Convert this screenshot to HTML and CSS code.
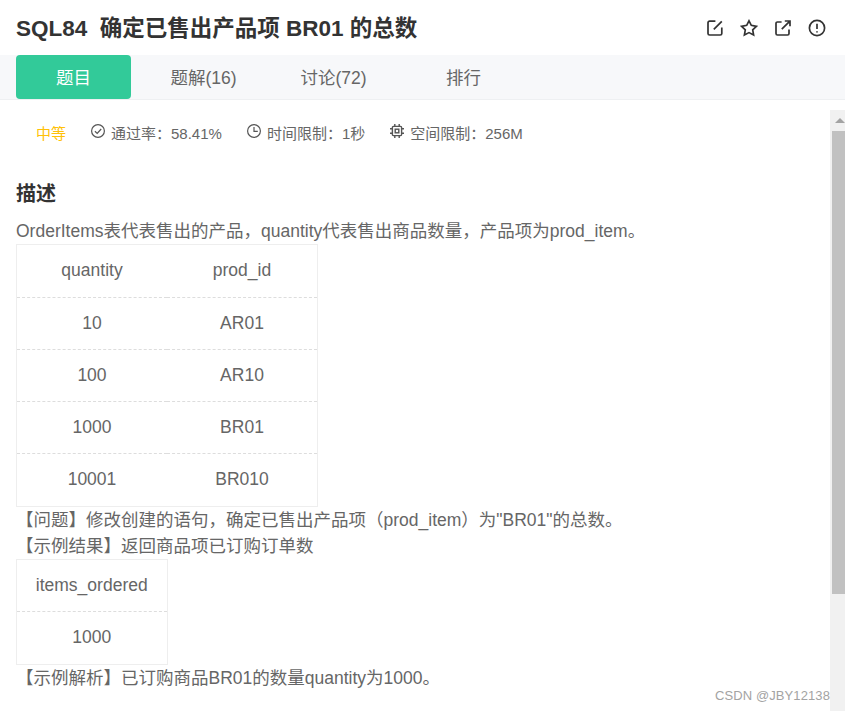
FILE: index.html
```html
<!DOCTYPE html>
<html lang="zh-CN">
<head>
<meta charset="utf-8">
<title>SQL84</title>
<link rel="stylesheet" href="styles.css">
</head>
<body>
<div class="page">
  <header class="head">
    <h1 class="title">SQL84&nbsp; 确定已售出产品项 BR01 的总数</h1>
    <div class="actions">
      <svg class="act" viewBox="0 0 18 18"><path d="M9.4 2.2H3.6A1.6 1.6 0 0 0 2 3.8v10.6A1.6 1.6 0 0 0 3.6 16h10.6a1.6 1.6 0 0 0 1.6-1.6V8.6M7.8 10.4 15.8 2.4"/></svg>
      <svg class="act" viewBox="0 0 18 18"><path d="M9 1.8 11.3 6.3 16.4 7.3 12.7 10.9 13.6 16 9 13.6 4.4 16 5.3 10.9 1.6 7.3 6.7 6.3Z"/></svg>
      <svg class="act" viewBox="0 0 18 18"><path d="M7.6 3H3.4A1.4 1.4 0 0 0 2 4.4v10.2A1.4 1.4 0 0 0 3.4 16h10.2a1.4 1.4 0 0 0 1.4-1.4v-4.2M7.8 10.2 15.6 2.4M10.8 2H16v5.2"/></svg>
      <svg class="act" viewBox="0 0 18 18"><circle cx="9" cy="9" r="7.6"/><path d="M9 4.8v5.2M9 12.2v1.2"/></svg>
    </div>
  </header>
  <nav class="tabs">
    <a class="tab tab-on">题目</a>
    <a class="tab">题解(16)</a>
    <a class="tab">讨论(72)</a>
    <a class="tab">排行</a>
  </nav>
  <div class="body">
    <main class="main">
      <div class="meta">
        <span class="level">中等</span>
        <span class="stat"><svg class="ico" viewBox="0 0 14 14"><circle cx="7" cy="7" r="6.4"/><path d="M3.9 7.2 6.2 9.4 10.2 5"/></svg>通过率：58.41%</span>
        <span class="stat"><svg class="ico" viewBox="0 0 14 14"><circle cx="7" cy="7" r="6.4"/><path d="M7 3V7.4H10.8"/></svg>时间限制：1秒</span>
        <span class="stat"><svg class="ico ico-chip" viewBox="0 0 14 14"><rect x="2.4" y="2.4" width="9.2" height="9.2" rx="1"/><rect x="5.2" y="5.2" width="3.6" height="3.6"/><path d="M4.8 0v2.4M9.2 0v2.4M4.8 11.6V14M9.2 11.6V14M0 4.8h2.4M0 9.2h2.4M11.6 4.8H14M11.6 9.2H14"/></svg>空间限制：256M</span>
      </div>
      <h2 class="desc-title">描述</h2>
      <p class="line">OrderItems表代表售出的产品，quantity代表售出商品数量，产品项为prod_item。</p>
      <table class="data">
        <tr><td>quantity</td><td>prod_id</td></tr>
        <tr><td>10</td><td>AR01</td></tr>
        <tr><td>100</td><td>AR10</td></tr>
        <tr><td>1000</td><td>BR01</td></tr>
        <tr><td>10001</td><td>BR010</td></tr>
      </table>
      <p class="line">【问题】修改创建的语句，确定已售出产品项（prod_item）为"BR01"的总数。</p>
      <p class="line">【示例结果】返回商品项已订购订单数</p>
      <table class="data">
        <tr><td>items_ordered</td></tr>
        <tr><td>1000</td></tr>
      </table>
      <p class="line">【示例解析】已订购商品BR01的数量quantity为1000。</p>
    </main>
    <aside class="scroll">
      <div class="arrow"></div>
      <div class="thumb"></div>
    </aside>
  </div>
  <div class="mark">CSDN @JBY12138</div>
</div>
</body>
</html>
```
FILE: styles.css
```css
* { box-sizing: border-box; }
html, body { margin: 0; height: 100%; overflow: hidden; background: #fff; }
body {
  font-family: "Liberation Sans", "Noto Sans CJK SC", sans-serif;
  color: #666;
}
.page { position: relative; width: 845px; height: 711px; overflow: hidden; display: flex; flex-direction: column; }
.head { height: 55px; flex: none; display: flex; align-items: center; justify-content: space-between; padding: 0 19px 0 16px; }
.title { margin: 0 0 3px; font-size: 22.5px; font-weight: 700; color: #333; white-space: nowrap; }
.actions { display: flex; gap: 16px; }
.act { width: 18px; height: 18px; fill: none; stroke: #333; stroke-width: 1.7; }
.tabs { height: 45px; flex: none; display: flex; gap: 15px; padding-left: 16px; background: #f7f8fa; border-bottom: 1px solid #eef0f2; }
.tab { width: 115px; height: 44px; padding-bottom: 2px; display: flex; align-items: center; justify-content: center; font-size: 17.5px; color: #666; border-radius: 4px; }
.tab-on { background: #32ca99; color: #fff; }
.body { flex: 1; display: flex; min-height: 0; }
.main { flex: 1; min-width: 0; padding: 22px 0 0 16px; overflow: hidden; }
.meta { display: flex; align-items: center; height: 20px; padding-left: 20px; font-size: 15px; color: #666; }
.level { color: #ffc107; margin-right: 25px; }
.stat { display: flex; align-items: center; margin-right: 25px; }
.ico { width: 14px; height: 14px; margin-right: 6px; fill: none; stroke: #555; stroke-width: 1.2; position: relative; top: -1px; }
.ico-chip { stroke-width: 1.4; }
.desc-title { margin: 38px 0 0; font-size: 20px; line-height: 28px; font-weight: 700; color: #333; }
.line { margin: 10px 0 0; font-size: 17.5px; line-height: 26.25px; white-space: nowrap; }
.line + .line, .data + .line { margin-top: 0; }
.data { border-collapse: collapse; font-size: 17.5px; text-align: center; table-layout: fixed; }
.data td { width: 150.5px; height: 52.25px; padding: 0; border-top: 1px solid #eee; border-bottom: 1px dashed #ddd; }
.data td:first-child { border-left: 1px solid #eee; }
.data td:last-child { border-right: 1px solid #eee; }
.data tr + tr td { border-top: 1px dashed #ddd; }
.data tr:last-child td { border-bottom: 1px solid #eee; }
.scroll { width: 15px; flex: none; margin-top: 10px; background: #f1f1f1; padding-left: 2px; display: flex; flex-direction: column; }
.arrow { height: 21px; flex: none; position: relative; }
.arrow::before { content: ""; position: absolute; left: 3px; top: 8px; border: 5px solid transparent; border-top: 0; border-bottom-color: #a3a3a3; }
.thumb { height: 463px; flex: none; background: #c1c1c1; }
.mark { position: absolute; right: 15px; top: 687px; font-size: 13px; line-height: 18px; color: #a3a3a3; letter-spacing: .1px; }
```
